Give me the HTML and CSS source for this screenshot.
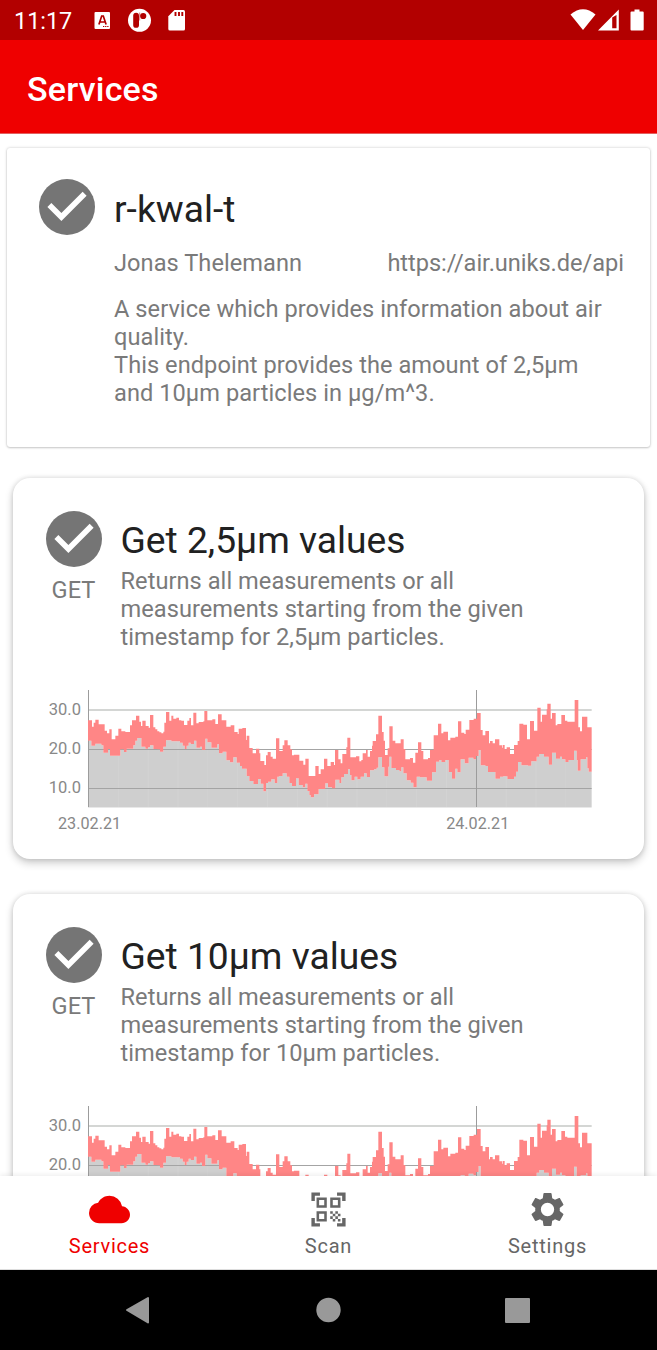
FILE: index.html
```html
<!DOCTYPE html>
<html lang="en">
<head>
<meta charset="utf-8">
<title>Services</title>
<link rel="stylesheet" href="styles.css">
</head>
<body>
<svg class="defs" aria-hidden="true">
  <symbol id="check" viewBox="2 2 20 20">
    <circle cx="12" cy="12" r="10" fill="#757575"/>
    <path d="M10 17l-5-5 1.410-1.410L10 14.170l7.590-7.590L19 8z" fill="#fff"/>
  </symbol>
</svg>
<div class="screen">
  <header class="status">
    <span class="clock">11:17</span>
    <svg class="status-left" viewBox="90 0 100 40">
      <rect x="94.500" y="12" width="15.500" height="17" rx="1" fill="#fff"/>
      <path d="M98.900 24.500l2.800-8.500h1.600l2.800 8.500M100 22h5" fill="none" stroke="#b20000" stroke-width="1.700"/>
      <path d="M103 26.500h6" stroke="#b20000" stroke-width="1" stroke-dasharray="1.300 .8"/>
      <circle cx="139.500" cy="20.300" r="11.500" fill="#fff"/>
      <rect x="133.200" y="12.800" width="5.800" height="15" rx="2.900" fill="#b20000"/>
      <circle cx="143.200" cy="16" r="3.100" fill="#b20000"/>
      <path d="M139.700 12.500v8" stroke="#b20000" stroke-width=".5"/>
      <path d="M174.500 10H183.500Q185 10 185 11.500V29Q185 30.500 183.500 30.500H170Q168.300 30.500 168.300 29V16.200z" fill="#fff"/>
      <path d="M175.500 12v4M179 12v4M182.300 12v4" stroke="#b20000" stroke-width="1.900"/>
    </svg>
    <svg class="status-right" viewBox="566 0 86 40">
      <path d="M570.500 14.500Q583 4 595.500 14.500L583 30z" fill="#fff"/>
      <path d="M618.800 9.500V30.500H598zM612.200 17.500V28.300H616.500V15z" fill="#fff" fill-rule="evenodd"/>
      <path d="M634.500 9.400h5v2h3.200q1 0 1 1v17q0 1-1 1h-11.200q-1 0-1-1v-17q0-1 1-1h3z" fill="#fff"/>
    </svg>
  </header>
  <div class="appbar"><h1>Services</h1></div>
  <main class="content">
    <section class="card service">
      <svg class="check"><use href="#check"/></svg>
      <div class="body">
        <h2>r-kwal-t</h2>
        <div class="meta"><span>Jonas Thelemann</span><span class="url">https://air.uniks.de/api</span></div>
        <p>A service which provides information about air<br>quality.<br>This endpoint provides the amount of 2,5µm<br>and 10µm particles in µg/m^3.</p>
      </div>
    </section>
    <section class="card endpoint">
      <div class="top">
        <div class="side"><svg class="check"><use href="#check"/></svg><span>GET</span></div>
        <div class="body"><h2>Get 2,5µm values</h2>
        <p>Returns all measurements or all<br>measurements starting from the given<br>timestamp for 2,5µm particles.</p></div>
      </div>
      <div class="chart"></div>
    </section>
    <section class="card endpoint">
      <div class="top">
        <div class="side"><svg class="check"><use href="#check"/></svg><span>GET</span></div>
        <div class="body"><h2>Get 10µm values</h2>
        <p>Returns all measurements or all<br>measurements starting from the given<br>timestamp for 10µm particles.</p></div>
      </div>
      <div class="chart partial"></div>
    </section>
  </main>
  <nav class="tabs">
    <a class="tab active">
      <svg viewBox="0 0 24 24"><path d="M19.350 10.040A7.490 7.490 0 0 0 12 4C9.110 4 6.600 5.640 5.350 8.040A5.994 5.994 0 0 0 0 14c0 3.310 2.690 6 6 6h13c2.760 0 5-2.240 5-5 0-2.640-2.050-4.780-4.650-4.960z" fill="currentColor"/></svg>
      <span>Services</span>
    </a>
    <a class="tab">
      <svg viewBox="0 0 24 24"><path fill="currentColor" d="M9.500 6.500v3h-3v-3h3M11 5H5v6h6V5zm-1.500 9.500v3h-3v-3h3M11 13H5v6h6v-6zm6.500-6.500v3h-3v-3h3M19 5h-6v6h6V5zm-6 8h1.500v1.500H13V13zm1.500 1.500H16V16h-1.500v-1.500zM16 13h1.500v1.500H16V13zm-3 3h1.500v1.500H13V16zm1.500 1.500H16V19h-1.500v-1.500zM16 16h1.500v1.500H16V16zm1.500-1.500H19V16h-1.500v-1.500zm0 3H19V19h-1.500v-1.500zM22 7h-2V4h-3V2h5v5zm0 15v-5h-2v3h-3v2h5zM2 22h5v-2H4v-3H2v5zM2 2v5h2V4h3V2H2z"/></svg>
      <span>Scan</span>
    </a>
    <a class="tab">
      <svg viewBox="0 0 24 24"><path fill="currentColor" d="M19.140 12.940c.04-.3.06-.61.06-.94 0-.32-.02-.64-.07-.94l2.030-1.580c.18-.14.23-.41.12-.61l-1.920-3.320c-.12-.22-.37-.29-.59-.22l-2.390.96c-.5-.38-1.030-.7-1.620-.94L14.400 2.810c-.04-.24-.24-.41-.48-.41h-3.840c-.24 0-.43.17-.47.41L9.250 5.350c-.59.24-1.130.57-1.620.94l-2.390-.96c-.22-.08-.47 0-.59.22L2.740 8.870c-.12.21-.08.47.12.61l2.030 1.580c-.05.3-.09.63-.09.94s.02.64.07.94l-2.030 1.580c-.18.14-.23.41-.12.61l1.920 3.320c.12.22.37.29.59.22l2.390-.96c.5.38 1.030.7 1.620.94l.36 2.540c.05.24.24.41.48.41h3.840c.24 0 .44-.17.47-.41l.36-2.540c.59-.24 1.130-.56 1.620-.94l2.390.96c.22.08.47 0 .59-.22l1.920-3.320c.12-.22.07-.47-.12-.61l-2.010-1.580zM12 15.900a3.900 3.900 0 1 1 0-7.800 3.900 3.900 0 0 1 0 7.800z"/></svg>
      <span>Settings</span>
    </a>
  </nav>
  <footer class="sysnav">
    <svg viewBox="0 0 657 80"><g fill="#999" stroke="#999" stroke-width="2" stroke-linejoin="round"><path d="M127 40 148 28V52.500z"/><circle cx="328.500" cy="40" r="11.200"/><rect x="506" y="29" width="23" height="23"/></g></svg>
  </footer>
</div>
<script src="chart.js"></script>
</body>
</html>
```
FILE: styles.css
```css
* { box-sizing: border-box; }
body { margin: 0; background: #fff; font-family: Roboto, "Liberation Sans", sans-serif; }
h1, h2, p { margin: 0; font-weight: 400; }
.defs { display: block; width: 0; height: 0; }
.screen { width: 657px; height: 1350px; display: flex; flex-direction: column; overflow: hidden; }
.status { height: 40px; flex: none; background: #b20000; display: flex; align-items: center; color: #fff; padding: 0 5px 0 14px; }
.status svg { height: 40px; flex: none; }
.clock { width: 76px; font-size: 23.400px; line-height: 40px; letter-spacing: 0; padding-top: 2px; }
.status-left { width: 100px; }
.status-right { width: 86px; margin-left: auto; }
.appbar { height: 94px; flex: none; background: #ef0000; color: #fff; padding: 29px 27px 0; border-bottom: 1px solid #e26060; }
.appbar h1 { font-size: 34px; line-height: 40px; font-weight: 500; letter-spacing: .2px; }
.content { flex: 1; min-height: 0; overflow: hidden; padding: 14px 7px 0; display: flex; flex-direction: column; color: #7a7a7a; background: #fff; }
.card { flex: none; background: #fff; }
.service { height: 299px; border-radius: 3px; box-shadow: 0 0 3px rgba(0,0,0,.22), 0 1px 2px rgba(0,0,0,.14); padding: 31.500px 27px 0 32px; display: flex; gap: 19px; }
.check { width: 56px; height: 56px; flex: none; display: block; }
.service .check { margin-top: -.3px; }
.body { flex: 1; white-space: nowrap; }
h2 { color: #212121; font-size: 37.200px; line-height: 44px; }
.service h2 { padding-top: 7.500px; }
.meta { display: flex; justify-content: space-between; font-size: 23.600px; line-height: 28px; letter-spacing: .05px; margin-top: 18px; }
.url { letter-spacing: -.03px; margin-right: -1px; }
p { font-size: 23.600px; line-height: 28px; letter-spacing: .05px; }
.service p { margin-top: 18px; }
.endpoint { height: 381px; margin: 31px 6px 0; border-radius: 17px; box-shadow: 0 4px 9px rgba(0,0,0,.2), 0 0 5px rgba(0,0,0,.13); padding-top: 33px; }
.endpoint + .endpoint { margin-top: 35px; }
.top { display: flex; gap: 19px; padding-left: 32.500px; height: 169px; }
.side { width: 56px; display: flex; flex-direction: column; align-items: center; font-size: 23.600px; line-height: 28px; gap: 9px; }
.side .check { margin: -.3px 0 0 0; }
.top h2 { padding-top: 7px; }
.top p { margin-top: 5px; }
.chart { display: grid; grid-template-columns: 67px 504px; column-gap: 8px; padding-top: 10px; }
.ylabels { display: flex; flex-direction: column; padding-top: 10px; font-size: 16.500px; line-height: 19px; gap: 20px; text-align: right; color: #888; margin-right: -1px; }
.plot { width: 504px; height: 119px; display: block; }
.xlabels { grid-column: 1 / 3; display: flex; gap: 325px; padding: 5px 0 0 45px; font-size: 16.200px; line-height: 20px; color: #888; }
.partial .xlabels, .partial .ylabels span:last-child { display: none; }
.tabs { position: relative; flex: none; height: 94px; display: flex; background: #fff; color: #666; box-shadow: 0 -2px 4px rgba(0,0,0,.06); border-bottom: 1px solid #ddd; }
.tab { flex: 1; display: flex; flex-direction: column; align-items: center; padding-top: 13px; font-size: 20px; line-height: 24px; letter-spacing: .75px; gap: 4px; }
.tab svg { width: 41px; height: 41px; }
.active { color: #ef0000; }
.sysnav { flex: none; height: 80px; background: #000; }
.sysnav svg { display: block; width: 657px; height: 80px; }
```
FILE: chart.js
```js
// Step series as "start:level" pairs, in third-pixel plot units.
const high = "0:121 12:140 17:128 22:119 32:133 50:152 57:160 64:148 71:178 82:167 91:146 100:154 112:156 126:136 132:121 144:107 154:125 159:138 163:122 173:138 182:143 186:105 196:142 202:148 208:154 214:157 220:160 226:155 229:128 234:96 244:122 250:107 256:116 265:113 273:121 280:122 288:135 298:122 304:114 309:136 316:98 325:130 332:126 346:124 349:93 358:121 373:118 382:132 390:103 401:121 415:140 428:136 439:156 449:162 452:146 463:144 474:180 476:167 484:204 494:220 504:206 514:220 517:243 529:255 534:226 539:216 548:230 554:236 564:175 574:213 584:196 589:181 599:196 607:208 612:226 618:224 634:242 646:254 652:236 662:288 682:258 692:282 698:268 708:236 718:258 728:246 738:255 741:210 751:238 758:250 763:222 775:202 778:173 787:232 804:229 814:244 820:240 824:220 834:210 839:230 846:213 852:197 854:183 864:163 871:107 882:156 887:182 891:225 899:205 904:139 914:182 922:190 938:178 947:207 952:238 966:234 975:248 982:218 990:187 1000:213 1006:238 1020:234 1026:210 1037:166 1050:131 1060:160 1066:155 1080:181 1087:173 1102:170 1110:124 1120:158 1129:162 1133:149 1144:120 1157:116 1167:99 1178:150 1184:166 1192:153 1203:190 1206:183 1214:190 1221:178 1234:196 1242:203 1244:195 1250:208 1256:202 1266:222 1278:195 1289:183 1294:131 1306:134 1317:178 1326:123 1338:152 1348:83 1358:125 1362:104 1376:88 1378:71 1388:116 1392:99 1403:136 1408:132 1420:105 1431:122 1438:125 1460:60 1471:142 1476:154 1482:110 1498:142";
const low = "0:182 10:197 22:191 40:196 46:218 60:207 66:227 97:208 108:216 116:206 136:196 142:182 148:174 160:200 172:206 180:202 186:196 196:207 208:208 216:215 226:200 234:181 250:184 276:188 284:197 290:207 296:197 302:188 308:192 318:182 325:203 336:200 342:210 352:176 358:187 370:203 388:193 393:220 404:215 415:241 426:247 436:232 446:248 456:258 462:266 476:288 484:303 496:312 510:297 518:311 526:334 534:309 540:305 550:298 560:309 568:290 574:288 584:280 596:290 604:309 612:318 624:295 632:315 644:322 652:311 658:333 664:345 668:352 678:343 692:327 712:310 720:322 732:325 742:299 754:309 760:292 768:282 780:268 786:285 790:301 800:290 808:298 818:290 828:280 836:291 846:271 858:268 866:263 871:232 882:262 889:289 901:260 904:230 910:264 924:270 934:274 940:262 946:280 956:301 968:308 976:322 986:290 996:292 1016:302 1032:277 1044:245 1054:240 1060:246 1072:240 1082:276 1092:296 1102:266 1108:277 1118:238 1130:250 1142:233 1156:238 1164:228 1172:210 1178:256 1192:258 1200:276 1222:296 1236:290 1246:289 1258:297 1278:290 1284:275 1290:246 1300:256 1320:257 1330:244 1346:230 1354:222 1368:230 1382:254 1392:218 1404:236 1416:230 1422:238 1432:246 1442:240 1458:212 1466:240 1469:272 1478:238 1494:232 1498:265 1502:275";
const END = 1511;
const parse = text => text.split(" ").map(p => p.split(":").map(Number));
const corners = text => {
  const s = parse(text);
  return s.flatMap(([x, y], i) => [[x, y], [i + 1 < s.length ? s[i + 1][0] : END, y]]);
};
const upper = corners(high), lower = corners(low);
const band = "M" + upper.concat([...lower].reverse()).join("L") + "Z";
const area = "M0,381L" + lower.join("L") + `L${END},381Z`;
// Faint seams between the filled segments, up to the lower edge of the band.
const levels = parse(low);
let seams = "";
for (let x = 91; x < END; x += 89.5) {
  seams += `M${x} 381V${levels.filter(p => p[0] <= x).pop()[1]}`;
}
document.querySelectorAll(".chart").forEach(el => {
  el.innerHTML = `<div class="ylabels"><span>30.0</span><span>20.0</span><span>10.0</span></div>
  <svg class="plot" viewBox="0 30 1512 357" preserveAspectRatio="none">
    <path d="${area}" fill="#cfcfcf"/>
    <path d="${seams}" stroke="#d5d5d5" stroke-width="2"/>
    <path d="M0 90H1511" stroke="#d4d6d4" stroke-width="6"/>
    <path d="M0 208.500H1511M0 325.500H1511" stroke="#a4a4a4" stroke-width="3"/>
    <path d="M1.500 30V381M1165.500 30V381" stroke="#9c9c9c" stroke-width="3"/>
    <path d="M0 382.500H1511" stroke="#e8e8e8" stroke-width="3"/>
    <path d="${band}" fill="#ff8686"/>
  </svg>
  <div class="xlabels"><span>23.02.21</span><span>24.02.21</span></div>`;
});
```
